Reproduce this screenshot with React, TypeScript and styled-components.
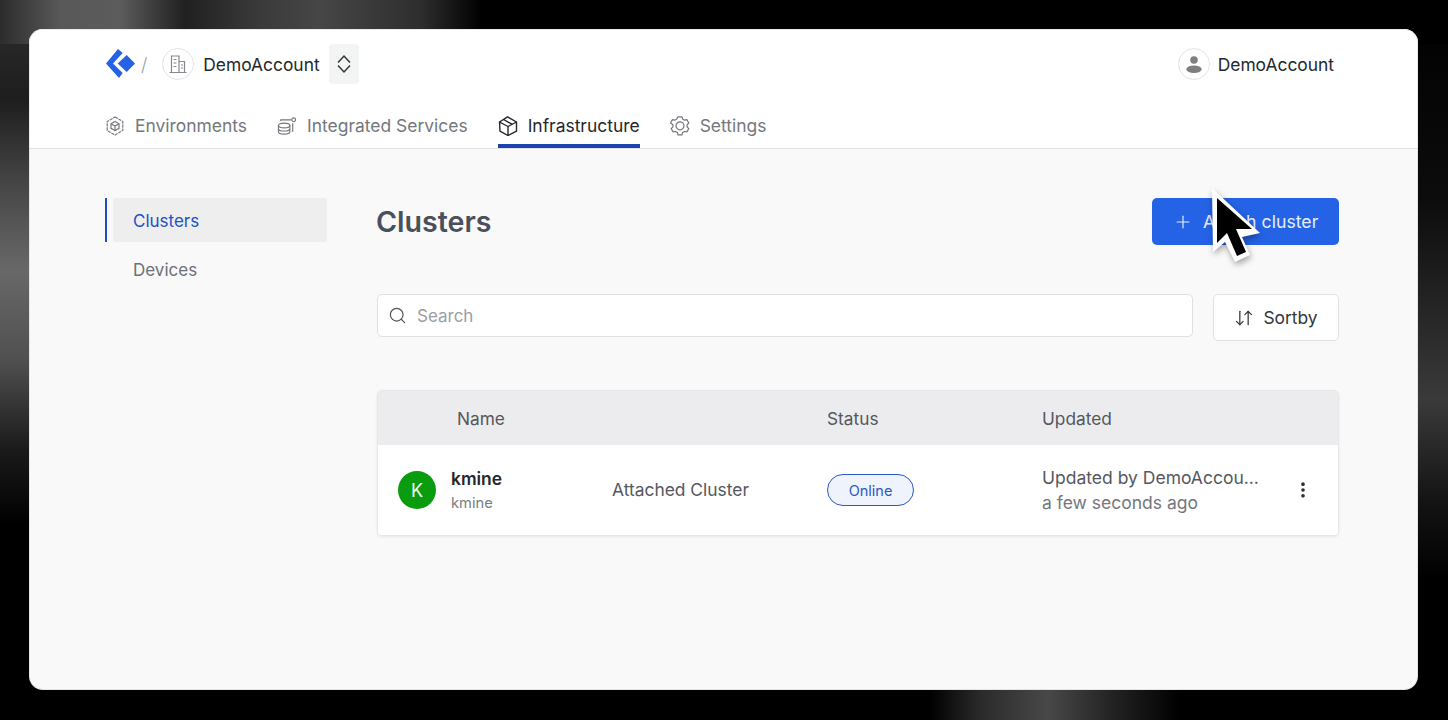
import React from 'react';
import styled, { createGlobalStyle } from 'styled-components';
import { Plus, Search as SearchIcon, ArrowDownUp, EllipsisVertical } from 'lucide-react';

const GlobalStyle = createGlobalStyle`
  html, body {
    margin: 0;
    padding: 0;
    background: #000;
    font-family: "Inter", "Liberation Sans", sans-serif;
    overflow: hidden;
  }
  * { box-sizing: border-box; }
`;

const Backdrop = styled.div`
  position: relative;
  width: 1448px;
  height: 720px;
  padding: 29px 30px 30px 29px;
  background-color: #000;
  background-repeat: no-repeat;
  background-image:
    linear-gradient(90deg, #2c2c2c 0, #585858 60px, #5c5c5c 120px, #202020 185px, #3a3a3a 260px, #464646 320px, #2e2e2e 420px, #000 482px),
    linear-gradient(180deg, #2e2e2e 0, #1e1e1e 100px, #444 180px, #686868 270px, #505050 360px, #1a1a1a 450px, #000 525px),
    linear-gradient(180deg, #000 0, #0c0c0c 200px, #3a3a3a 400px, #141414 500px, #000 580px),
    linear-gradient(90deg, #000 930px, #2a2a2a 980px, #484848 1048px, #242424 1110px, #000 1180px);
  background-size: 100% 44px, 44px 100%, 44px 100%, 100% 44px;
  background-position: 0 0, 0 0, 100% 0, 0 100%;
`;

const Card = styled.div`
  position: relative;
  height: 661px;
  border-radius: 14px;
  background: #f9f9f9;
  overflow: hidden;
  display: flex;
  flex-direction: column;

  &::after {
    content: '';
    position: absolute;
    inset: 0;
    border-radius: 14px;
    border: 1px solid rgba(0, 0, 0, 0.08);
    pointer-events: none;
  }
`;

const Header = styled.header`
  background: #fff;
  border-bottom: 1px solid #e2e3e5;
  height: 120px;
  padding: 0 84px 0 76px;
  display: flex;
  flex-direction: column;
`;

const TopRow = styled.div`
  height: 70px;
  display: flex;
  align-items: center;
  justify-content: space-between;
`;

const Crumbs = styled.div`
  display: flex;
  align-items: center;
`;

const Slash = styled.span`
  margin: 0 15px 0 5px;
  font-size: 18px;
  font-weight: 300;
  color: #9a9ea5;
`;

const IconCircle = styled.span`
  width: 32px;
  height: 32px;
  border-radius: 50%;
  border: 1px solid #e4e4e6;
  background: #fff;
  display: flex;
  align-items: center;
  justify-content: center;
`;

const AccountName = styled.span<{ $gap: number }>`
  margin-left: ${({ $gap }) => $gap}px;
  font-size: 17.4px;
  font-weight: 400;
  color: #24272c;
`;

const Switcher = styled.span`
  margin-left: 9px;
  width: 30px;
  height: 40px;
  border-radius: 4px;
  background: #f3f4f4;
  display: flex;
  align-items: center;
  justify-content: center;
`;

const UserBox = styled.div`
  display: flex;
  align-items: center;
`;

const Tabs = styled.nav`
  display: flex;
  gap: 30px;
  height: 49px;
`;

const Tab = styled.div<{ $active?: boolean }>`
  height: 49px;
  padding-top: 8px;
  display: flex;
  align-items: center;
  gap: 10px;
  font-size: 17.45px;
  color: ${({ $active }) => ($active ? '#23262b' : '#74777d')};
  border-bottom: 4px solid ${({ $active }) => ($active ? '#1d43ad' : 'transparent')};
`;

const Body = styled.div`
  flex: 1;
  display: flex;
  padding: 49px 79px 0 76px;
`;

const Side = styled.aside`
  width: 222px;
  margin-right: 50px;
  display: flex;
  flex-direction: column;
  gap: 5px;
`;

const SideItem = styled.div<{ $active?: boolean }>`
  height: 44px;
  display: flex;
  border-left: 2px solid ${({ $active }) => ($active ? '#1d4fc4' : 'transparent')};
  padding-left: 6px;
`;

const SideLabel = styled.span<{ $active?: boolean }>`
  flex: 1;
  display: flex;
  align-items: center;
  padding: 2px 0 0 20px;
  border-radius: 3px;
  font-size: 17px;
  background: ${({ $active }) => ($active ? '#eeeeef' : 'transparent')};
  color: ${({ $active }) => ($active ? '#2151c5' : '#6d7077')};
`;

const Main = styled.main`
  flex: 1;
  display: flex;
  flex-direction: column;
`;

const TitleRow = styled.div`
  height: 47px;
  display: flex;
  align-items: center;
  justify-content: space-between;
`;

const Title = styled.h1`
  margin: 0 0 0 -1px;
  font-size: 28.6px;
  font-weight: 600;
  color: #4a5059;
`;

const AttachButton = styled.button`
  width: 187px;
  height: 47px;
  border: 0;
  border-radius: 5px;
  background: #2563e6;
  color: #e6eefc;
  font: inherit;
  font-size: 17.7px;
  display: flex;
  align-items: center;
  padding-left: 21px;
  gap: 10px;
`;

const Filters = styled.div`
  margin-top: 49px;
  display: flex;
  align-items: flex-start;
  gap: 20px;
`;

const SearchBox = styled.div`
  flex: 1;
  height: 43px;
  border: 1px solid #dfe0e3;
  border-radius: 5px;
  background: #fff;
  display: flex;
  align-items: center;
  padding-left: 10px;
  gap: 10px;
  font-size: 17px;
  color: #9b9ea4;
`;

const SortButton = styled.button`
  width: 126px;
  height: 47px;
  border: 1px solid #e1e2e5;
  border-radius: 5px;
  background: #fff;
  color: #33363b;
  font: inherit;
  font-size: 17.4px;
  display: flex;
  align-items: center;
  justify-content: center;
  gap: 9px;
`;

const Table = styled.section`
  margin-top: 49px;
  border: 1px solid #e6e7e9;
  border-radius: 5px;
  overflow: hidden;
  box-shadow: 0 1px 3px rgba(0, 0, 0, 0.08);
`;

const HeadRow = styled.div`
  height: 54px;
  padding: 1px 0 0 79px;
  background: #ececee;
  display: grid;
  grid-template-columns: 370px 215px 1fr;
  align-items: center;
  font-size: 17.3px;
  color: #53575e;
`;

const DataRow = styled.div`
  height: 90px;
  background: #fff;
  display: grid;
  grid-template-columns: 214px 215px 215px 1fr 36px;
  align-items: center;
  padding: 0 9px 0 20px;
`;

const NameCell = styled.div`
  display: flex;
  align-items: center;
  gap: 15px;
`;

const Avatar = styled.span`
  width: 38px;
  height: 38px;
  border-radius: 50%;
  background: #0a9c0e;
  color: #f2faf2;
  font-size: 18px;
  display: flex;
  align-items: center;
  justify-content: center;
`;

const NameStack = styled.div`
  display: flex;
  flex-direction: column;
  gap: 5px;
`;

const PrimaryName = styled.span`
  font-size: 17.4px;
  font-weight: 600;
  color: #24272c;
`;

const SubName = styled.span`
  font-size: 14.7px;
  color: #7b7e84;
`;

const Cell = styled.span`
  margin-top: -2px;
  font-size: 17.4px;
  color: #55585f;
`;

const Pill = styled.span`
  width: 87px;
  height: 32px;
  border: 1px solid #2b59c3;
  border-radius: 16px;
  background: #eef3fc;
  color: #2b59c3;
  font-size: 14.5px;
  display: flex;
  align-items: center;
  justify-content: center;
`;

const UpdatedCell = styled.div`
  display: flex;
  flex-direction: column;
  gap: 4px;
  font-size: 17.5px;
  color: #55585f;
  white-space: nowrap;
`;

const AgoText = styled.span`
  color: #74777d;
`;

const Kebab = styled.span`
  color: #2b2e33;
  display: flex;
`;

const Pointer = styled.svg`
  position: absolute;
  left: 1205px;
  top: 180px;
  filter: drop-shadow(1px 3px 3px rgba(0, 0, 0, 0.35));
`;

const Logo = () => (
  <svg width="31" height="30" viewBox="0 0 31 30">
    <path d="M1 14.500 13 0 17.700 4 8 14.500 17.700 24 14 29Z" fill="#2563e6" />
    <path d="M21.700 6 30 14.500 21.700 23 12.700 14.500Z" fill="#2563e6" />
  </svg>
);

const BuildingIcon = () => (
  <svg width="20" height="20" viewBox="0 0 20 20" fill="none" stroke="#85888d" strokeWidth="1.2">
    <path d="M1.500 18.500h17M3.500 18.500V2h7.500v16.500M11 7.500h5.500v11" />
    <path d="M5.500 5.500h3M5.500 9h3M5.500 12.500h3M13 11h2M13 14h2" />
  </svg>
);

const SwitchIcon = () => (
  <svg width="14" height="20" viewBox="0 0 14 20" fill="none" stroke="#2f3237" strokeWidth="1.5">
    <path d="M1 8.500 7 2l6 6.500M1 11.500 7 18l6-6.500" />
  </svg>
);

const UserIcon = () => (
  <svg width="22" height="22" viewBox="0 0 22 22" fill="#7f7f7f">
    <circle cx="11" cy="7" r="3.800" />
    <ellipse cx="11" cy="16.200" rx="7.600" ry="3.800" />
  </svg>
);

const EnvIcon = () => (
  <svg width="20" height="20" viewBox="0 0 20 20" fill="none" stroke="#74777d" strokeWidth="1.2">
    <path d="M10 1 17.800 5.500v9L10 19l-7.800-4.500v-9Z" strokeDasharray="3.200 .8" />
    <path d="M10 5.500 14 7.800v4.500L10 14.500 6 12.300V7.800Z" />
    <path d="M6 7.800 10 10 14 7.800M10 10v4.500" />
  </svg>
);

const ServicesIcon = () => (
  <svg width="20" height="20" viewBox="0 0 21 20" fill="none" stroke="#74777d" strokeWidth="1.2">
    <ellipse cx="7.500" cy="9.500" rx="6" ry="2.500" />
    <path d="M1.500 9.500v6.500c0 1.400 2.700 2.500 6 2.500s6-1.100 6-2.500V9.500M1.500 12.800c0 1.400 2.700 2.500 6 2.500s6-1.100 6-2.500" />
    <path d="M4 5V3.500h11M16.500 7v8.500h-1" />
    <circle cx="17.500" cy="3.500" r="2" />
  </svg>
);

const BoxIcon = () => (
  <svg width="20" height="20" viewBox="0 0 20 20" fill="none" stroke="#24272c" strokeWidth="1.400" strokeLinejoin="round">
    <path d="M1.500 6 10 10.500V19.500l-8-4.300Z" />
    <path d="M10 10.500 18.500 6v9.200L10 19.500" />
    <path d="M1.500 6 9.500 .8 18.500 6M5.500 3.500l8.500 4.700" />
  </svg>
);

const GearIcon = () => (
  <svg width="20" height="20" viewBox="0 0 20 20" fill="none" stroke="#74777d" strokeWidth="1.2" strokeLinejoin="round">
    <path d="M8 .8h4l.6 2.300 1.900 1.100 2.300-.6 2 3.400-1.700 1.700v2.200l1.700 1.700-2 3.400-2.300-.6-1.900 1.100-.6 2.300H8l-.6-2.300-1.900-1.100-2.300.6-2-3.400 1.700-1.700V8.700L.5 7l2-3.400 2.300.6 1.900-1.100Z" />
    <circle cx="10" cy="9.800" r="4" />
  </svg>
);

export default function App() {
  return (
    <Backdrop>
      <GlobalStyle />
      <Card>
        <Header>
          <TopRow>
            <Crumbs>
              <Logo />
              <Slash>/</Slash>
              <IconCircle><BuildingIcon /></IconCircle>
              <AccountName $gap={9}>DemoAccount</AccountName>
              <Switcher><SwitchIcon /></Switcher>
            </Crumbs>
            <UserBox>
              <IconCircle><UserIcon /></IconCircle>
              <AccountName $gap={8}>DemoAccount</AccountName>
            </UserBox>
          </TopRow>
          <Tabs>
            <Tab><EnvIcon />Environments</Tab>
            <Tab><ServicesIcon />Integrated Services</Tab>
            <Tab $active><BoxIcon />Infrastructure</Tab>
            <Tab><GearIcon />Settings</Tab>
          </Tabs>
        </Header>
        <Body>
          <Side>
            <SideItem $active><SideLabel $active>Clusters</SideLabel></SideItem>
            <SideItem><SideLabel>Devices</SideLabel></SideItem>
          </Side>
          <Main>
            <TitleRow>
              <Title>Clusters</Title>
              <AttachButton>
                <Plus size={20} strokeWidth={1.4} />
                Attach cluster
              </AttachButton>
            </TitleRow>
            <Filters>
              <SearchBox>
                <SearchIcon size={19} strokeWidth={1.5} color="#4e5158" />
                Search
              </SearchBox>
              <SortButton>
                <ArrowDownUp size={20} strokeWidth={1.5} />
                Sortby
              </SortButton>
            </Filters>
            <Table>
              <HeadRow>
                <span>Name</span>
                <span>Status</span>
                <span>Updated</span>
              </HeadRow>
              <DataRow>
                <NameCell>
                  <Avatar>K</Avatar>
                  <NameStack>
                    <PrimaryName>kmine</PrimaryName>
                    <SubName>kmine</SubName>
                  </NameStack>
                </NameCell>
                <Cell>Attached Cluster</Cell>
                <div><Pill>Online</Pill></div>
                <UpdatedCell>
                  <span>Updated by DemoAccou...</span>
                  <AgoText>a few seconds ago</AgoText>
                </UpdatedCell>
                <Kebab><EllipsisVertical size={20} strokeWidth={2.4} /></Kebab>
              </DataRow>
            </Table>
          </Main>
        </Body>
      </Card>
      <Pointer width="70" height="90" viewBox="0 0 70 90">
        <polygon points="7,8 8,72 20,62 30,82 45,75 37,57 55,53" fill="#fff" />
        <polygon points="12,18 12,63 22,53 32,76 41,72 31,49 47,49" fill="#000" />
      </Pointer>
    </Backdrop>
  );
}
